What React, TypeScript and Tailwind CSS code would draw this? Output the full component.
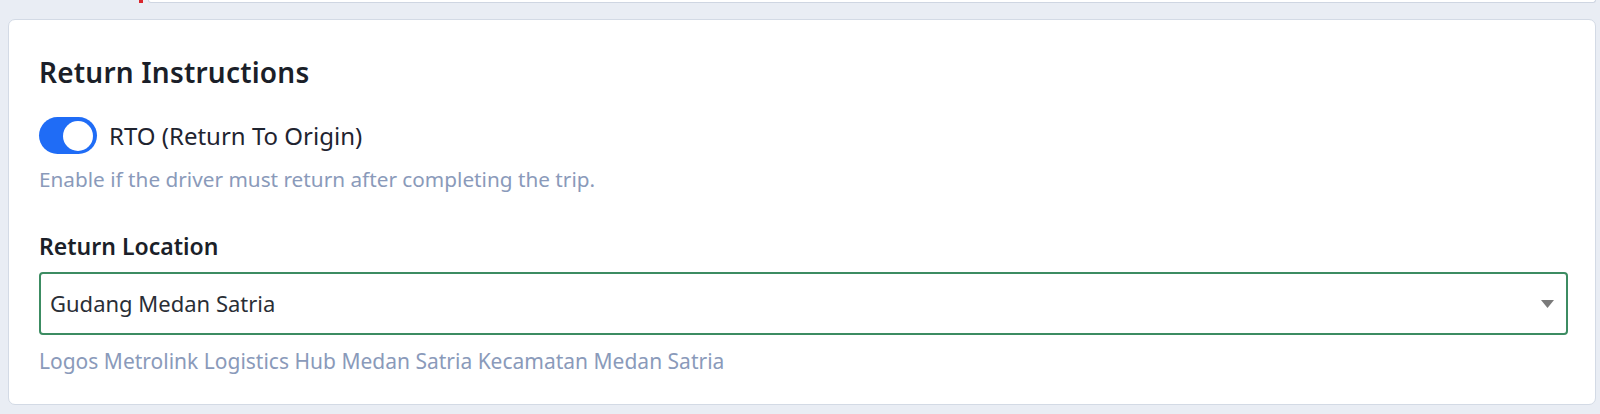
export default function App() {
  return (
    <div
      className="min-h-[414px] bg-[#e9edf4] pr-[4px] pl-[8px]"
      style={{ fontFamily: '"Noto Sans", "Open Sans", sans-serif' }}
    >
      {/* tail of the field above */}
      <div className="flex h-[3px] items-end">
        <div className="ml-[131px] h-[3px] w-[4px] bg-[#d9262c]" />
        <div className="ml-[5px] h-[3px] flex-1 rounded-b-[4px] border-b border-x border-[#cfd6e2] bg-white" />
      </div>

      <div className="mt-[16px] rounded-[7px] border border-[#d3dae5] bg-white pt-[36px] pr-[27px] pb-[30px] pl-[30px]">
        <h2 className="text-[28px] leading-[32px] font-semibold tracking-[0.2px] text-[#1b1f29]">
          Return Instructions
        </h2>

        <label className="mt-[29px] flex items-center gap-[12px]">
          <span className="flex h-[37px] w-[58px] items-center justify-end rounded-full bg-[#1f6cf6] pr-[4px]">
            <span className="h-[30px] w-[30px] rounded-full bg-white" />
          </span>
          <span className="text-[24px] leading-[30px] text-[#1f2430]">
            RTO (Return To Origin)
          </span>
        </label>
        <p className="mt-[12px] text-[20.75px] leading-[26px] text-[#8a9aba]">
          Enable if the driver must return after completing the trip.
        </p>

        <div className="mt-[40px] text-[23px] leading-[28px] font-semibold text-[#1b1f29]">
          Return Location
        </div>
        <div className="mt-[12px] flex h-[63px] items-center justify-between rounded-[4px] border-2 border-[#3c8c62] pr-[12px] pl-[9px]">
          <span className="text-[22px] text-[#2a2e36]">Gudang Medan Satria</span>
          <svg width="13" height="8" viewBox="0 0 13 8" className="text-[#7a7a7a]">
            <path d="M0 0h13L6.5 8z" fill="currentColor" />
          </svg>
        </div>
        <p className="mt-[13px] text-[21px] leading-[26px] text-[#8a9aba]">
          Logos Metrolink Logistics Hub Medan Satria Kecamatan Medan Satria
        </p>
      </div>
    </div>
  );
}
